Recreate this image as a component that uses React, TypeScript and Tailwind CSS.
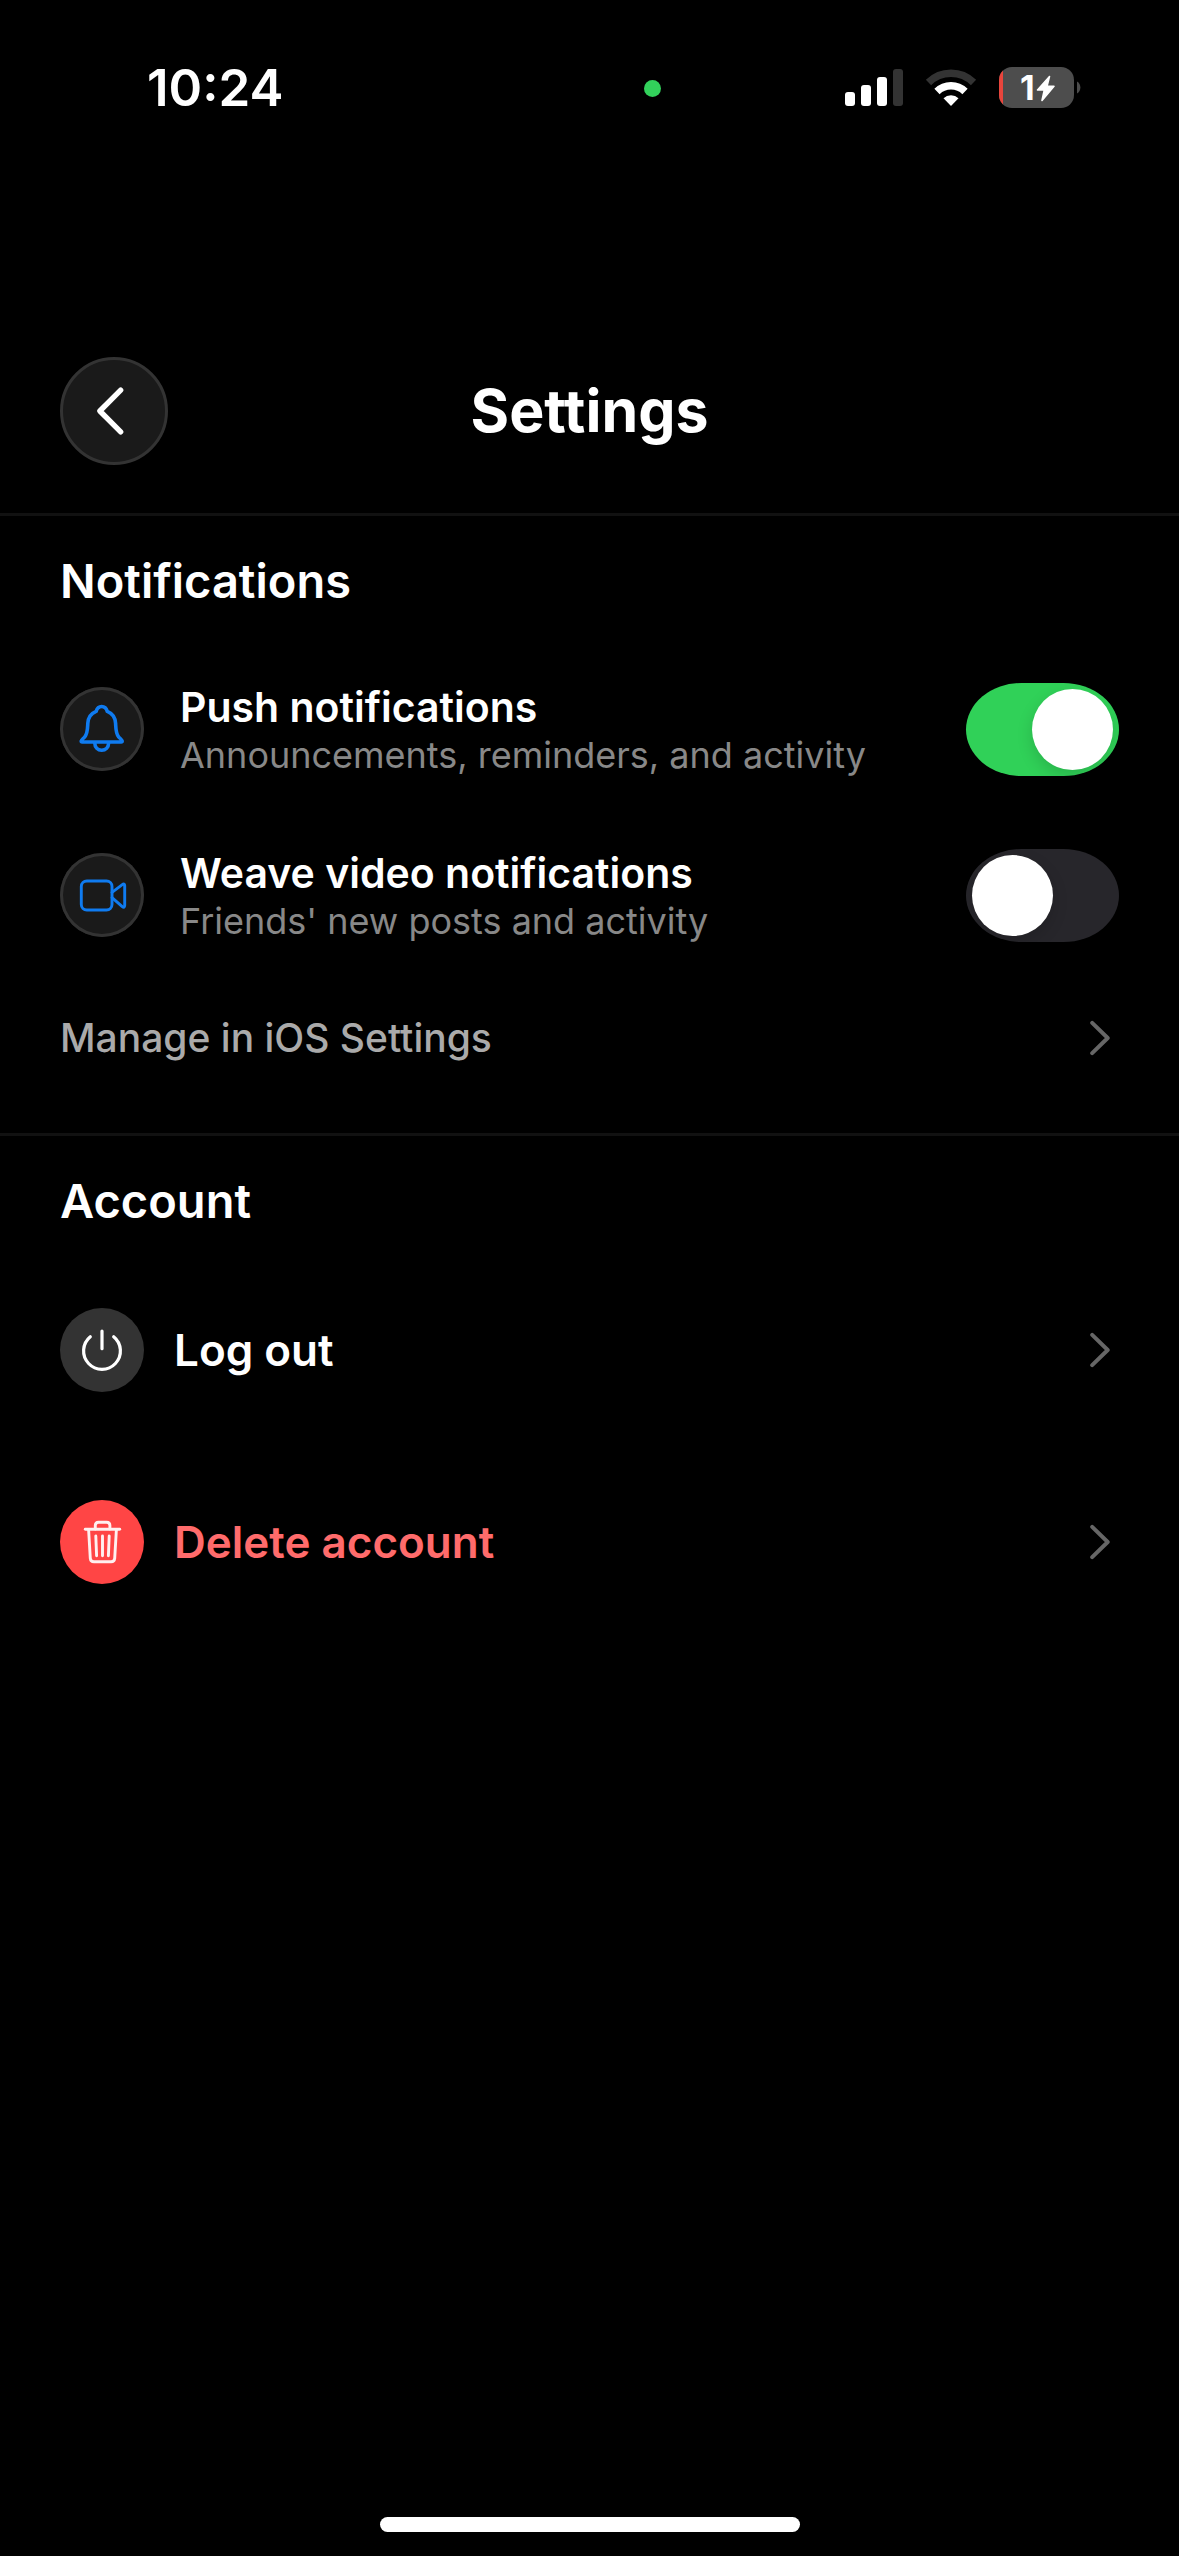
import { useState, type ReactNode } from "react";

function StatusBar() {
  return (
    <div className="flex h-44 items-center">
      <div className="flex w-full items-center justify-between pr-24 pl-[147px]">
        <time className="text-[51px] leading-[60px] font-semibold">10:24</time>
        <div className="flex items-center">
          <span className="mr-[184px] h-[17px] w-[17px] rounded-full bg-[#32d15b]" />
          <svg className="h-[42px] w-[58px]" viewBox="0 0 58 42" aria-label="Signal">
            <rect x="0" y="25" width="10" height="14" rx="3" fill="#fff" />
            <rect x="16" y="18" width="10" height="21" rx="3" fill="#fff" />
            <rect x="32" y="10" width="10" height="29" rx="3" fill="#fff" />
            <rect x="48" y="2" width="10" height="37" rx="3" fill="#333" />
          </svg>
          <svg className="ml-[22px] h-[42px] w-[52px]" viewBox="0 0 52 42" aria-label="Wi-Fi">
            <path d="M3.500 15.500A32 32 0 0 1 48.500 15.500" fill="none" stroke="#333" strokeWidth="7.500" />
            <path d="M12 24.500A20 20 0 0 1 40 24.500" fill="none" stroke="#fff" strokeWidth="7.500" />
            <path d="M26 39 18.500 31.300a11 11 0 0 1 15 0Z" fill="#fff" />
          </svg>
          <svg className="ml-[22px] h-[42px] w-[84px]" viewBox="0 0 84 42" aria-label="Battery">
            <defs>
              <clipPath id="battery">
                <rect x="0" y="0" width="75" height="41" rx="13" />
              </clipPath>
            </defs>
            <g clipPath="url(#battery)">
              <rect width="75" height="41" fill="#4d4d4d" />
              <rect width="4" height="41" fill="#e8453c" />
            </g>
            <path d="M78 14.500a7 7 0 0 1 0 12Z" fill="#4d4d4d" />
            <text x="21" y="33" fontSize="34" fontWeight="700" fill="#fff">
              1
            </text>
            <path
              d="M50.500 9.500 38.500 23h6.800L43 33.500 55 19.300h-7Z"
              fill="#fff"
              stroke="#fff"
              strokeWidth="1.600"
              strokeLinejoin="round"
            />
          </svg>
        </div>
      </div>
    </div>
  );
}

function Chevron() {
  return (
    <svg className="mr-[9px] h-9 w-5 shrink-0" viewBox="160 88 192 336" aria-hidden="true">
      <path
        d="M181 110l149 146-149 146"
        fill="none"
        stroke="#666"
        strokeWidth="38"
        strokeLinecap="round"
        strokeLinejoin="round"
      />
    </svg>
  );
}

const stroke = {
  fill: "none",
  strokeLinecap: "round",
  strokeLinejoin: "round",
} as const;

function BellIcon() {
  return (
    <svg className="h-[84px] w-[84px]" viewBox="0 0 84 84" aria-hidden="true">
      <g {...stroke} stroke="#0f7bf0" strokeWidth="3.600">
        <path d="M41.700 19.500c-2.800 0-4.700 1.800-5.600 4.900-5.400 2.200-8 6-8.300 12-.3 6.500-.2 10-3 13.400-1.500 1.800-3.300 2.700-3.600 4.300 0 .6.400.9 1 .9h39c.6 0 1-.3 1-.9-.3-1.600-2.100-2.500-3.600-4.300-2.800-3.400-2.700-6.900-3-13.400-.3-6-2.900-9.800-8.300-12-.9-3.100-2.800-4.900-5.600-4.900Z" />
        <path d="M34.800 56c0 4.200 3 7.200 6.900 7.200s6.900-3 6.900-7.200" />
      </g>
    </svg>
  );
}

function VideoIcon() {
  return (
    <svg className="h-[84px] w-[84px]" viewBox="0 0 84 84" aria-hidden="true">
      <g {...stroke} stroke="#0f7bf0" strokeWidth="2.900">
        <rect x="21.300" y="28" width="30.700" height="29" rx="5.500" />
        <path d="m52 39.300 10.300-7.700c1.400-1 2.400-.6 2.400 1v20c0 1.700-1 2.100-2.400 1L52 44.700" />
      </g>
    </svg>
  );
}

function PowerIcon() {
  return (
    <svg className="h-[84px] w-[84px]" viewBox="0 0 84 84" aria-hidden="true">
      <g {...stroke} stroke="#fff" strokeWidth="3.200">
        <path d="M42 23v17.700" />
        <path d="M30.300 28.700a18.400 18.400 0 1 0 23.400 0" />
      </g>
    </svg>
  );
}

function TrashIcon() {
  return (
    <svg className="h-[84px] w-[84px]" viewBox="0 0 84 84" aria-hidden="true">
      <g {...stroke} stroke="#fff0f0" strokeWidth="2.900">
        <path d="M25.300 29.300h34.400" />
        <path d="M35.300 29v-3.500c0-2 1.300-3.300 3.300-3.300h8c2 0 3.300 1.300 3.300 3.300V29" />
        <path d="m28.600 29.500 1.700 28.800c.2 2.200 1.500 3.400 3.600 3.400h17.200c2.100 0 3.400-1.200 3.600-3.400l1.700-28.800" />
        <path d="m35.800 36 .8 19.700M42.500 36v19.700M49.200 36l-.8 19.700" />
      </g>
    </svg>
  );
}

type ToggleRowProps = {
  id: string;
  icon: ReactNode;
  title: string;
  subtitle: string;
  checked: boolean;
  onChange: (value: boolean) => void;
};

function ToggleRow({ id, icon, title, subtitle, checked, onChange }: ToggleRowProps) {
  return (
    <div className="flex min-h-[166px] items-center gap-9">
      <span className="flex h-[84px] w-[84px] shrink-0 items-center justify-center rounded-full bg-[#1a1a1a] inset-ring-3 inset-ring-[#333]">
        {icon}
      </span>
      <label htmlFor={id} className="min-w-0 flex-1">
        <span className="block text-[41px] leading-[52px] font-semibold">{title}</span>
        <span className="block text-[36px] leading-[45px] text-[#888]">{subtitle}</span>
      </label>
      <input
        id={id}
        type="checkbox"
        role="switch"
        checked={checked}
        onChange={(e) => onChange(e.target.checked)}
        className="flex h-[93px] w-[153px] shrink-0 appearance-none items-center rounded-[56px/47px] bg-[#27262b] px-1.5 before:h-[81px] before:w-[81px] before:rounded-full before:bg-white before:shadow-[0_6px_16px_rgba(0,0,0,0.15)] checked:justify-end checked:bg-[#30d158]"
      />
    </div>
  );
}

export default function App() {
  const [push, setPush] = useState(true);
  const [video, setVideo] = useState(false);

  return (
    <div className="flex min-h-screen flex-col bg-black font-['Inter','Liberation_Sans',sans-serif] text-white">
      <StatusBar />

      <header className="mt-[181px] grid grid-cols-[1fr_auto_1fr] items-center border-b-3 border-[#111] px-15 pb-12">
        <button
          type="button"
          aria-label="Back"
          className="flex h-[108px] w-[108px] items-center justify-center rounded-full border-3 border-[#333] bg-[#1a1a1a] pr-2"
        >
          <svg className="h-[72px] w-[72px]" viewBox="0 0 512 512" aria-hidden="true">
            <path {...stroke} d="M332 108 184 256l148 148" stroke="#fff" strokeWidth="38" />
          </svg>
        </button>
        <h1 className="text-[59px] leading-[72px] font-bold">Settings</h1>
      </header>

      <main>
        <section className="border-b-3 border-[#111] px-15 py-[35px]">
          <h2 className="mb-[35px] text-[47px] leading-[60px] font-semibold">Notifications</h2>
          <ToggleRow
            id="push"
            icon={<BellIcon />}
            title="Push notifications"
            subtitle="Announcements, reminders, and activity"
            checked={push}
            onChange={setPush}
          />
          <ToggleRow
            id="video"
            icon={<VideoIcon />}
            title="Weave video notifications"
            subtitle="Friends' new posts and activity"
            checked={video}
            onChange={setVideo}
          />
          <button
            type="button"
            className="flex min-h-[120px] w-full items-center justify-between text-left"
          >
            <span className="text-[39px] leading-[48px] font-medium text-[#aaa]">
              Manage in iOS Settings
            </span>
            <Chevron />
          </button>
        </section>

        <section className="px-15 pt-[35px]">
          <h2 className="mb-[23px] text-[47px] leading-[60px] font-semibold">Account</h2>
          <button type="button" className="flex min-h-48 w-full items-center gap-[30px] text-left">
            <span className="h-[84px] w-[84px] shrink-0 rounded-full bg-[#333]">
              <PowerIcon />
            </span>
            <span className="flex-1 text-[44px] leading-[54px] font-semibold">Log out</span>
            <Chevron />
          </button>
          <button type="button" className="flex min-h-48 w-full items-center gap-[30px] text-left">
            <span className="h-[84px] w-[84px] shrink-0 rounded-full bg-[#ff4545]">
              <TrashIcon />
            </span>
            <span className="flex-1 text-[44px] leading-[54px] font-semibold text-[#ff6b6b]">
              Delete account
            </span>
            <Chevron />
          </button>
        </section>
      </main>

      <div className="mx-auto mt-auto mb-6 h-[15px] w-[420px] rounded-full bg-white" />
    </div>
  );
}
